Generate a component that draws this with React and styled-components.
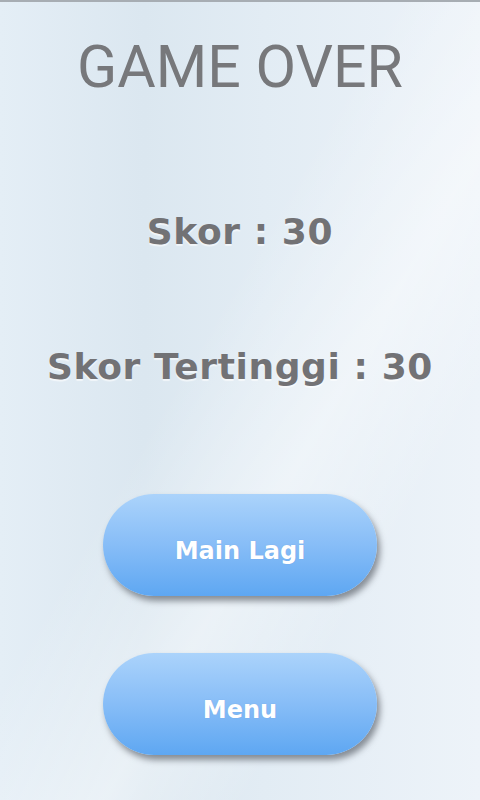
import styled, { createGlobalStyle } from "styled-components";

const GlobalStyle = createGlobalStyle`
	html, body {
		margin: 0;
		padding: 0;
	}
	body {
		font-family: "DejaVu Sans", sans-serif;
	}
`;

const Screen = styled.div`
	position: relative;
	width: 480px;
	height: 800px;
	overflow: hidden;
	display: flex;
	flex-direction: column;
	align-items: center;
	border-top: 2px solid #a7adb3;
	box-sizing: border-box;
	background:
		linear-gradient(120deg, rgba(255, 255, 255, 0) 42%, rgba(255, 255, 255, 0.4) 60%, rgba(255, 255, 255, 0) 75%),
		linear-gradient(90deg, #e4eef6 0%, #dbe7f0 30%, #e2ecf4 55%, #edf3f9 100%);
`;

const Title = styled.h1`
	margin: 35px 0 0;
	font-family: Roboto, "Liberation Sans", sans-serif;
	font-weight: 400;
	font-size: 59px;
	line-height: 60px;
	color: #77787b;
	letter-spacing: 0;
`;

const ScoreLine = styled.div`
	margin-top: ${(p) => p.$gap}px;
	font-family: "DejaVu Sans", sans-serif;
	font-weight: 700;
	font-size: 36px;
	line-height: 40px;
	letter-spacing: 0.6px;
	color: #727275;
	text-shadow: 0 2px 1px rgba(255, 255, 255, 0.6);
`;

const Buttons = styled.div`
	margin-top: 107px;
	display: flex;
	flex-direction: column;
	gap: 57px;
`;

const PillButton = styled.button`
	width: 274px;
	height: 102px;
	padding: 12px 0 0;
	border: none;
	border-radius: 51px;
	background: linear-gradient(to bottom, #abd3fb 0%, #87bdf7 50%, #5ea7f2 100%);
	box-shadow: 3px 5px 6px rgba(55, 60, 70, 0.55);
	color: #ffffff;
	font-family: "DejaVu Sans", sans-serif;
	font-weight: 700;
	font-size: 24px;
	text-shadow: 0 0 1px rgba(90, 120, 180, 0.4);
	cursor: pointer;
`;

export default function App() {
	return (
		<>
			<GlobalStyle />
			<Screen>
				<Title>GAME OVER</Title>
				<ScoreLine $gap={115}>Skor : 30</ScoreLine>
				<ScoreLine $gap={95}>Skor Tertinggi : 30</ScoreLine>
				<Buttons>
					<PillButton>Main Lagi</PillButton>
					<PillButton>Menu</PillButton>
				</Buttons>
			</Screen>
		</>
	);
}
